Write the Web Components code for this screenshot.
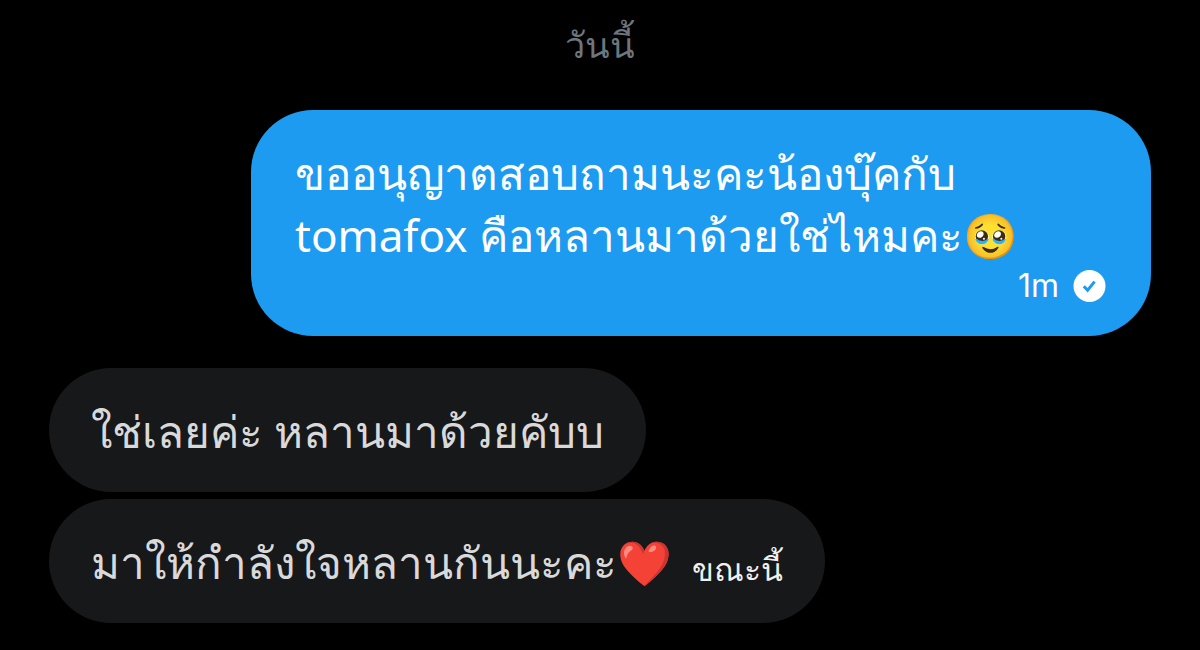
<!DOCTYPE html>
<html lang="th">
<head>
<meta charset="utf-8">
<meta name="viewport" content="width=device-width, initial-scale=1">
<title>Messages</title>
<style>
  body { margin: 0; background: #000; font-family: "Noto Sans", sans-serif; }
</style>
</head>
<body>
<template id="thread">
  <style>
    :host { display: block; padding: 12px 49px 26px; }
    main { display: flex; flex-direction: column; gap: 32px; }
  </style>
  <main><slot></slot></main>
</template>

<template id="day">
  <style>
    :host { display: block; text-align: center; color: #6e767d; font-size: 36px; line-height: 66px; }
  </style>
  <slot></slot>
</template>

<template id="group">
  <style>
    :host { display: flex; flex-direction: column; align-items: flex-start; gap: 7px; }
    :host([sent]) { align-items: flex-end; }
  </style>
  <slot></slot>
</template>

<template id="bubble">
  <style>
    :host {
      display: flex; align-items: flex-end; column-gap: 20px; box-sizing: border-box;
      max-width: 75vw; padding: 32px 42px 30px; border-radius: 62px;
      background: #16181a; color: #d9d9d9; font-size: 44px; line-height: 62px;
    }
    :host([sent]) { flex-direction: column; align-items: stretch; padding: 32px 44px 30px; background: #1d9bf0; color: #fff; }
    p { margin: 0; }
  </style>
  <p><slot></slot></p>
  <slot name="meta"></slot>
</template>

<template id="meta">
  <style>
    :host {
      display: flex; justify-content: flex-end; align-items: center; gap: 14px;
      color: #f0f0f0; font-family: Inter, sans-serif; font-size: 32px; line-height: 46px;
    }
    :host([status]) { color: #fff; line-height: 40px; }
    svg { display: none; width: 34px; height: 34px; }
    :host([status]) svg { display: block; }
  </style>
  <time><slot></slot></time>
  <svg viewBox="0 0 34 34" role="img" aria-label="Sent">
    <circle cx="16.5" cy="17" r="16" fill="#fff"/>
    <path d="M10.8 17.2l3.8 4 7-8.6" fill="none" stroke="#1d9bf0" stroke-width="3"/>
  </svg>
</template>

<script>
  const define = (name, id) => customElements.define(name, class extends HTMLElement {
    constructor() {
      super();
      this.attachShadow({ mode: "open" }).append(document.getElementById(id).content.cloneNode(true));
    }
  });
  define("chat-thread", "thread");
  define("chat-day", "day");
  define("chat-group", "group");
  define("chat-bubble", "bubble");
  define("chat-meta", "meta");
</script>

<chat-thread>
  <chat-day>วันนี้</chat-day>
  <chat-group sent>
    <chat-bubble sent>ขออนุญาตสอบถามนะคะน้องบุ๊คกับ tomafox คือหลานมาด้วยใช่ไหมคะ🥹<chat-meta slot="meta" status>1m</chat-meta></chat-bubble>
  </chat-group>
  <chat-group>
    <chat-bubble>ใช่เลยค่ะ หลานมาด้วยคับบ</chat-bubble>
    <chat-bubble>มาให้กำลังใจหลานกันนะคะ❤️<chat-meta slot="meta">ขณะนี้</chat-meta></chat-bubble>
  </chat-group>
</chat-thread>
</body>
</html>
